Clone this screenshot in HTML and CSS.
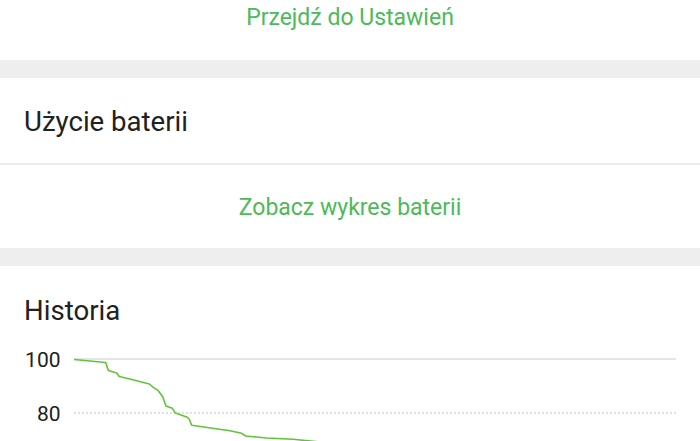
FILE: index.html
```html
<!DOCTYPE html>
<html lang="pl">
<head>
<meta charset="utf-8">
<link rel="stylesheet" href="styles.css">
</head>
<body>
<div class="screen">
  <section class="card card-top">
    <a class="link">Przejdź do Ustawień</a>
  </section>
  <div class="gap"></div>
  <section class="card card-usage">
    <h2 class="title">Użycie baterii</h2>
  </section>
  <div class="divider"></div>
  <section class="card card-graph-link">
    <a class="link">Zobacz wykres baterii</a>
  </section>
  <div class="gap"></div>
  <section class="card card-history">
    <h2 class="title">Historia</h2>
    <svg class="chart" width="700" height="101" viewBox="0 340 700 101" xmlns="http://www.w3.org/2000/svg">
      <text x="60.5" y="366.5" text-anchor="end" class="axis">100</text>
      <text x="60.5" y="420.5" text-anchor="end" class="axis">80</text>
      <line x1="74" y1="359" x2="676" y2="359" stroke="#dcdcdc" stroke-width="1.5"/>
      <line x1="74" y1="413" x2="676" y2="413" stroke="#d8d8d8" stroke-width="1.5" stroke-dasharray="2 2"/>
      <polyline fill="none" stroke="#62c23a" stroke-width="1.6" stroke-linejoin="round"
        points="74,359.5 105.7,362.5 108.3,370.5 116.7,373 119.3,376.5 130,379 149.3,384 153.3,387.3 158.3,390.7 162.7,396.7 166,406 172.3,408.3 175,412.7 178.3,414 187.3,417.3 189.3,419.3 191.7,425.3 230,430.7 241.7,433.3 245.7,436 266.7,438 293.3,439.3 320,442"/>
    </svg>
  </section>
</div>
</body>
</html>
```

FILE: styles.css
```css
html, body {
  margin: 0;
  padding: 0;
  background: #ffffff;
}
body {
  font-family: Roboto, "Noto Sans", sans-serif;
  width: 700px;
  height: 441px;
  overflow: hidden;
}
.screen {
  display: flex;
  flex-direction: column;
}
.card {
  background: #ffffff;
}
.gap {
  height: 18px;
  background: #eeeeee;
  flex: none;
}
.divider {
  height: 2px;
  background: #ececec;
  flex: none;
}
.link {
  display: block;
  text-align: center;
  color: #4cba58;
  font-size: 23px;
  line-height: 26px;
}
.title {
  margin: 0;
  font-weight: 400;
  color: #212121;
  font-size: 27.6px;
  line-height: 30px;
  padding-left: 24px;
}
.card-top {
  height: 60px;
  padding-top: 5px;
  box-sizing: border-box;
}
.card-usage {
  height: 85px;
  padding-top: 29px;
  box-sizing: border-box;
}
.card-graph-link {
  height: 83px;
  padding-top: 30px;
  box-sizing: border-box;
}
.card-history {
  padding-top: 30px;
  height: 175px;
  box-sizing: border-box;
}
.chart {
  display: block;
  margin-top: 14px;
}
.axis {
  font-family: Roboto, sans-serif;
  font-size: 21px;
  fill: #212121;
}
```
